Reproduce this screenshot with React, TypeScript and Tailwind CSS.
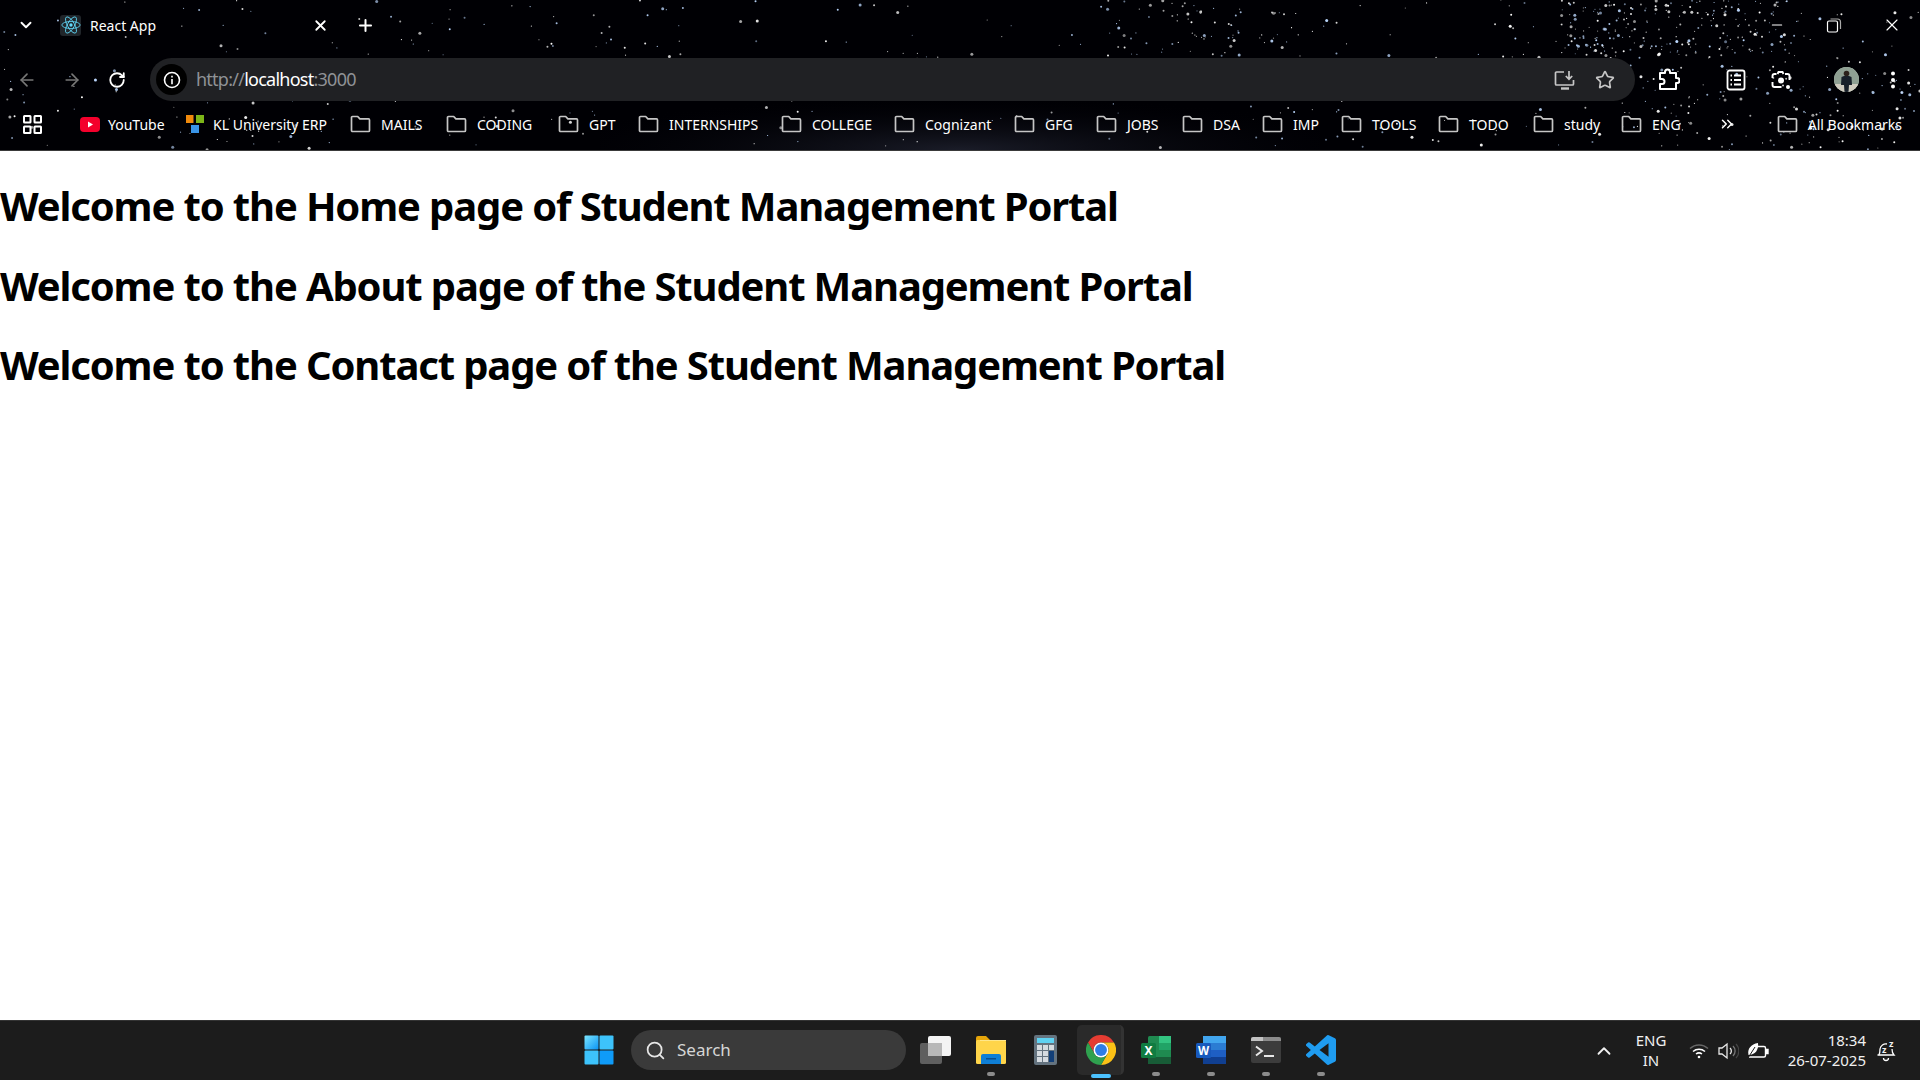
import React from "react";
import { ArrowLeft, ArrowRight, RotateCw, Star, ChevronDown, ChevronUp, ChevronsRight, X, Plus, Search, Minus } from "lucide-react";

function makeStars() {
  let seed = 12345;
  const rnd = () => {
    seed = (seed * 1664525 + 1013904223) % 4294967296;
    return seed / 4294967296;
  };
  const out: { x: number; y: number; r: number; o: number; c: string }[] = [];
  const add = (n: number, x0: number, x1: number, y0: number, y1: number) => {
    for (let i = 0; i < n; i++) {
      const big = rnd();
      out.push({
        x: x0 + rnd() * (x1 - x0),
        y: y0 + rnd() * (y1 - y0),
        r: big > 0.85 ? 1.5 : big > 0.5 ? 1 : 0.6,
        o: 0.5 + rnd() * 0.5,
        c: rnd() > 0.6 ? "#bcd8ff" : "#ffffff",
      });
    }
  };
  add(150, 0, 640, 0, 150);
  add(100, 640, 1280, 0, 150);
  add(70, 1100, 1300, 0, 56);
  add(190, 1280, 1920, 0, 150);
  add(210, 1560, 1800, 0, 56);
  add(120, 1620, 1920, 55, 150);
  return out;
}
const stars = makeStars();

const folders: [string, string][] = [
  ["MAILS", "w-[96px]"],
  ["CODING", "w-[112px]"],
  ["GPT", "w-[80px]"],
  ["INTERNSHIPS", "w-[143px]"],
  ["COLLEGE", "w-[113px]"],
  ["Cognizant", "w-[120px]"],
  ["GFG", "w-[82px]"],
  ["JOBS", "w-[86px]"],
  ["DSA", "w-[80px]"],
  ["IMP", "w-[79px]"],
  ["TOOLS", "w-[97px]"],
  ["TODO", "w-[95px]"],
  ["study", "w-[88px]"],
  ["ENG", "w-[76px]"],
];

function Folder() {
  return (
    <svg width="21" height="18" viewBox="0 0 21 18" fill="none" stroke="#c6c6c6" strokeWidth="1.7" strokeLinejoin="round" className="shrink-0">
      <path d="M1.5 2.5a1 1 0 0 1 1-1h5.2l2.2 2.4h8.6a1 1 0 0 1 1 1v10.600a1 1 0 0 1-1 1H2.500a1 1 0 0 1-1-1z" />
    </svg>
  );
}

function Bookmark({ label, className = "" }: { label: string; className?: string }) {
  return (
    <div className={"flex items-center gap-[10px] shrink-0 " + className}>
      <Folder />
      <span>{label}</span>
    </div>
  );
}

function ReactIcon() {
  return (
    <div className="w-[21px] h-[21px] rounded-[3px] bg-[#20252a] flex items-center justify-center">
      <svg width="20" height="20" viewBox="-12 -12 24 24" fill="none" stroke="#61dafb" strokeWidth="1">
        <ellipse rx="11" ry="4.200" />
        <ellipse rx="11" ry="4.200" transform="rotate(60)" />
        <ellipse rx="11" ry="4.200" transform="rotate(120)" />
        <circle r="2" fill="#61dafb" stroke="none" />
      </svg>
    </div>
  );
}

function Chrome({ size = 30 }: { size?: number }) {
  return (
    <svg width={size} height={size} viewBox="0 0 48 48">
      <path fill="#e53c32" d="M3.200 12A24 24 0 0 1 44.800 12L24 12A12 12 0 0 0 13.600 30Z" />
      <path fill="#fbc116" d="M44.800 12A24 24 0 0 1 24 48L34.400 30A12 12 0 0 0 24 12Z" />
      <path fill="#2fa14f" d="M24 48A24 24 0 0 1 3.200 12L13.600 30A12 12 0 0 0 34.400 30Z" />
      <circle cx="24" cy="24" r="12" fill="#fff" />
      <circle cx="24" cy="24" r="9.500" fill="#2f7de6" />
    </svg>
  );
}

function Dot({ on }: { on?: boolean }) {
  return on ? (
    <div className="absolute bottom-[3px] left-1/2 -translate-x-1/2 w-[20px] h-[4px] rounded-full bg-[#4cc2ff]" />
  ) : (
    <div className="absolute bottom-[5px] left-1/2 -translate-x-1/2 w-[8px] h-[4px] rounded-full bg-[#8c8c8c]" />
  );
}

function Cell({ children, dot, on }: { children: React.ReactNode; dot?: boolean; on?: boolean }) {
  return (
    <div className="relative w-[55px] h-[60px] flex items-center justify-center shrink-0">
      {on && <div className="absolute left-[4px] top-[4px] w-[47px] h-[50px] rounded-[5px] bg-[#2a2a2a] border-r-[3px] border-[#333333]" />}
      <div className="relative -mt-[1px]">{children}</div>
      {dot && <Dot on={on} />}
    </div>
  );
}

export default function App() {
  return (
    <div className="w-[1920px] h-[1080px] overflow-hidden flex flex-col bg-white font-['Noto_Sans',sans-serif]">
      <header className="relative h-[151px] shrink-0 bg-[#000004] border-b border-[#3a3a3a] text-white">
        <svg className="absolute inset-0" width="1920" height="150">
          <defs>
            <radialGradient id="neb" cx="50%" cy="100%" r="60%">
              <stop offset="0%" stopColor="#1a1c28" />
              <stop offset="100%" stopColor="#000004" stopOpacity="0" />
            </radialGradient>
          </defs>
          <rect x="600" y="60" width="720" height="90" fill="url(#neb)" />
          {stars.map((s, i) => (
            <circle key={i} cx={s.x} cy={s.y} r={s.r} fill={s.c} opacity={s.o} />
          ))}
        </svg>

        <div className="relative h-[50px] flex items-center">
          <ChevronDown size={18} strokeWidth={2.5} className="ml-[17px]" />
          <div className="ml-[25px]"><ReactIcon /></div>
          <span className="ml-[9px] text-[14px] w-[69px] whitespace-nowrap">React App</span>
          <X size={17} strokeWidth={2.5} className="ml-[153px]" />
          <Plus size={19} strokeWidth={2.5} className="ml-[27px]" />
          <div className="ml-auto flex items-center">
            <Minus size={16} strokeWidth={1.6} />
            <svg width="16" height="16" viewBox="0 0 16 16" fill="none" stroke="#fff" strokeWidth="1.200" className="ml-[41px]">
              <rect x="1.500" y="4" width="10" height="11" rx="1.500" />
              <path d="M4.500 2h7a3 3 0 0 1 3 3v7" stroke="#aaa" />
            </svg>
            <X size={20} strokeWidth={1.4} className="ml-[40px] mr-[18px]" />
          </div>
        </div>

        <div className="relative mt-[8px] h-[43px] flex items-center">
          <ArrowLeft size={20} strokeWidth={2} className="ml-[17px] text-[#777777]" />
          <ArrowRight size={20} strokeWidth={2} className="ml-[25px] text-[#777777]" />
          <RotateCw size={18} strokeWidth={2.4} className="ml-[26px]" />
          <div className="ml-[24px] w-[1485px] h-[43px] rounded-full bg-[#202124] flex items-center pl-[6px] pr-[20px]">
            <div className="w-[31px] h-[31px] rounded-full bg-black flex items-center justify-center">
              <svg width="18" height="18" viewBox="0 0 18 18" fill="none" stroke="#fff" strokeWidth="1.600">
                <circle cx="9" cy="9" r="7.500" />
                <path d="M9 8v5.200M9 4.800v1.600" />
              </svg>
            </div>
            <div className="ml-[9px] text-[18px] tracking-[-0.75px] text-[#8f9296]">
              http://<span className="text-white">localhost</span>:3000
            </div>
            <svg width="22" height="22" viewBox="0 0 22 22" fill="none" stroke="#c6c6c6" strokeWidth="1.700" className="ml-auto">
              <path d="M10 3H2.500a1 1 0 0 0-1 1v11a1 1 0 0 0 1 1h16a1 1 0 0 0 1-1v-4" />
              <path d="M7 19.500h8" strokeWidth="2.400" />
              <path d="M15 2v8M11.800 7l3.200 3.200L18.200 7" />
            </svg>
            <Star size={20} strokeWidth={2} className="ml-[19px] text-[#c6c6c6]" />
          </div>
          <svg width="24" height="24" viewBox="0 0 24 24" fill="none" stroke="#fff" strokeWidth="2" strokeLinejoin="round" className="ml-[21px]">
            <path d="M4 5h5V4a2.500 2.500 0 0 1 5 0v1h6v5h1a2.500 2.500 0 0 1 0 5h-1v6H4v-5h2a2.500 2.500 0 0 0 0-5H4z" />
          </svg>
          <svg width="20" height="22" viewBox="0 0 20 22" fill="none" stroke="#fff" strokeWidth="1.800" className="ml-[46px]">
            <rect x="1.500" y="1.500" width="17" height="19" rx="2" />
            <path d="M8 6.500h7M8 11h7M8 15.500h7M4.500 6.500h1.500M4.500 11h1.500M4.500 15.500h1.500" />
          </svg>
          <svg width="22" height="22" viewBox="0 0 22 22" fill="none" stroke="#fff" strokeWidth="1.900" className="ml-[24px]">
            <path d="M6.500 5H4.500a2 2 0 0 0-2 2v2M15 5h2.500a2 2 0 0 1 2 2v4M2.500 13v3a2 2 0 0 0 2 2h7" />
            <path d="M7.500 5l1-2h4l1 2" />
            <circle cx="11" cy="11.500" r="3" fill="#fff" stroke="none" />
            <circle cx="18" cy="18" r="2" fill="#fff" stroke="none" />
          </svg>
          <div className="ml-[42px] w-[25px] h-[25px] rounded-full bg-[#b9c4bb] overflow-hidden flex items-center justify-center shrink-0">
            <svg width="25" height="25" viewBox="0 0 25 25">
              <rect width="25" height="25" fill="#8fa093" />
              <rect y="17" width="25" height="8" fill="#cfcbbf" />
              <path d="M7.500 10q5-2.500 10 0l.5 8h-3l-.500 7h-4l-.500-7h-3z" fill="#18202a" />
              <circle cx="12.500" cy="6.500" r="2.800" fill="#2c211b" />
            </svg>
          </div>
          <svg width="6" height="18" viewBox="0 0 6 18" fill="#fff" className="ml-[31px]">
            <circle cx="3" cy="2.500" r="2" />
            <circle cx="3" cy="9" r="2" />
            <circle cx="3" cy="15.500" r="2" />
          </svg>
        </div>

        <div className="relative h-[48px] flex items-center text-[14px] text-white whitespace-nowrap -mt-[1px]">
          <svg width="19" height="19" viewBox="0 0 19 19" fill="none" stroke="#fff" strokeWidth="2" className="ml-[23px] shrink-0">
            <rect x="1" y="1" width="6.500" height="6.500" rx="0.500" />
            <rect x="11.500" y="1" width="6.500" height="6.500" rx="0.500" />
            <rect x="1" y="11.500" width="6.500" height="6.500" rx="0.500" />
            <rect x="11.500" y="11.500" width="6.500" height="6.500" rx="0.500" />
          </svg>
          <div className="ml-[38px] flex items-center">
            <div className="w-[106px] flex items-center gap-[8px]">
              <svg width="20" height="15" viewBox="0 0 20 15">
                <rect width="20" height="15" rx="4" fill="#f4002c" />
                <path d="M8 4.500l5 3-5 3z" fill="#fff" />
              </svg>
              <span>YouTube</span>
            </div>
            <div className="w-[164px] flex items-center gap-[9px]">
              <svg width="18" height="18" viewBox="0 0 18 18">
                <rect x="0" y="0" width="7.500" height="8" fill="#f08a0c" />
                <rect x="10" y="0" width="8" height="8" fill="#7cb518" />
                <rect x="5" y="10" width="8" height="8" fill="#3a94e6" />
              </svg>
              <span>KL University ERP</span>
            </div>
            {folders.map(([b, w]) => (
              <Bookmark key={b} label={b} className={w} />
            ))}
          </div>
          <ChevronsRight size={18} strokeWidth={2} className="ml-[21px]" />
          <div className="ml-auto mr-[18px]">
            <Bookmark label="All Bookmarks" />
          </div>
        </div>
      </header>

      <main className="flex-1 pt-[28px] text-black tracking-[-1.14px]">
        <h1 className="text-[40px] leading-[53px] font-bold mb-[26.5px]">Welcome to the Home page of Student Management Portal</h1>
        <h1 className="text-[40px] leading-[53px] font-bold mb-[26.5px]">Welcome to the About page of the Student Management Portal</h1>
        <h1 className="text-[40px] leading-[53px] font-bold">Welcome to the Contact page of the Student Management Portal</h1>
      </main>

      <footer className="h-[60px] shrink-0 bg-[#1c1c1c] border-t border-[#333333] flex items-center text-white">
        <svg width="30" height="30" viewBox="0 0 30 30" className="ml-[584px] -mt-[1px]">
          <defs>
            <linearGradient id="w" x1="0" y1="0" x2="1" y2="1">
              <stop offset="0%" stopColor="#7be6ff" />
              <stop offset="100%" stopColor="#0a94f5" />
            </linearGradient>
          </defs>
          <rect x="0.500" y="0.500" width="14" height="14" rx="1" fill="url(#w)" />
          <rect x="15.500" y="0.500" width="14" height="14" rx="1" fill="#3dc3fb" />
          <rect x="0.500" y="15.500" width="14" height="14" rx="1" fill="#3dc3fb" />
          <rect x="15.500" y="15.500" width="14" height="14" rx="1" fill="#0f9bf8" />
        </svg>
        <div className="ml-[17px] w-[275px] h-[40px] -mt-[1px] rounded-full bg-[#3a3a3a] flex items-center shrink-0">
          <Search size={21} strokeWidth={2} className="ml-[14px] text-[#e6e6e6]" />
          <span className="ml-[11px] text-[17px] text-[#d6d6d6]">Search</span>
        </div>
        <div className="ml-[2px] flex items-center">
          <Cell>
            <svg width="32" height="30" viewBox="0 0 32 30">
              <rect x="0" y="8" width="22" height="21" rx="2" fill="#5f5f5f" />
              <rect x="8" y="1" width="23" height="20" rx="2" fill="#f4f4f4" />
              <rect x="8" y="8" width="14" height="13" fill="#b8b8b8" />
            </svg>
          </Cell>
          <Cell dot>
            <svg width="31" height="30" viewBox="0 0 31 30">
              <path d="M1 3a2 2 0 0 1 2-2h8l4 4v4H1z" fill="#e5a50a" />
              <rect x="1" y="5" width="30" height="24" rx="1.500" fill="#ffd54a" />
              <rect x="5" y="5" width="26" height="1" fill="#ffe78a" />
              <path d="M6 21a2 2 0 0 1 2-2h16a2 2 0 0 1 2 2v8H6z" fill="#0f7fd6" />
              <rect x="11" y="23" width="10" height="1.500" fill="#0a4f8f" />
            </svg>
          </Cell>
          <Cell>
            <svg width="23" height="30" viewBox="0 0 23 30">
              <rect width="23" height="30" rx="2" fill="#64737f" />
              <rect x="3" y="3" width="17" height="5" fill="#5fd2f2" />
              <rect x="3" y="10" width="5" height="5" fill="#d5dbe0" />
              <rect x="9" y="10" width="5" height="5" fill="#d5dbe0" />
              <rect x="15" y="10" width="5" height="5" fill="#d5dbe0" />
              <rect x="3" y="16" width="5" height="5" fill="#d5dbe0" />
              <rect x="9" y="16" width="5" height="5" fill="#d5dbe0" />
              <rect x="3" y="22" width="5" height="5" fill="#d5dbe0" />
              <rect x="9" y="22" width="5" height="5" fill="#d5dbe0" />
              <rect x="15" y="16" width="5" height="11" fill="#123f78" />
            </svg>
          </Cell>
          <Cell dot on>
            <Chrome />
          </Cell>
          <Cell dot>
            <svg width="30" height="30" viewBox="0 0 30 30">
              <rect x="7" y="1" width="23" height="28" rx="1.500" fill="#1f8a50" />
              <rect x="18" y="1" width="12" height="7" fill="#33c481" />
              <rect x="18" y="8" width="12" height="7" fill="#21a366" />
              <rect x="7" y="22" width="23" height="7" fill="#185c37" />
              <rect x="0" y="8" width="15" height="15" rx="1.500" fill="#107c41" />
              <text x="7.500" y="20" textAnchor="middle" fontSize="12" fontWeight="700" fill="#fff" fontFamily="Noto Sans, sans-serif">X</text>
            </svg>
          </Cell>
          <Cell dot>
            <svg width="30" height="30" viewBox="0 0 30 30">
              <rect x="7" y="1" width="23" height="28" rx="1.500" fill="#1e5fc4" />
              <rect x="7" y="1" width="23" height="7" fill="#41a5ee" />
              <rect x="7" y="8" width="23" height="7" fill="#2b7cd3" />
              <rect x="7" y="22" width="23" height="7" fill="#103f91" />
              <rect x="0" y="8" width="15" height="15" rx="1.500" fill="#185abd" />
              <text x="7.500" y="20" textAnchor="middle" fontSize="11.500" fontWeight="700" fill="#fff" fontFamily="Noto Sans, sans-serif">W</text>
            </svg>
          </Cell>
          <Cell dot>
            <svg width="30" height="26" viewBox="0 0 30 26">
              <rect width="30" height="26" rx="2" fill="#3c3c3c" />
              <path d="M0 2a2 2 0 0 1 2-2h10v4H0z" fill="#c2c2c2" />
              <path d="M12 0h16a2 2 0 0 1 2 2v2H12z" fill="#8b8b8b" />
              <path d="M5 9.500l6 4.500-6 4.500" fill="none" stroke="#e8e8e8" strokeWidth="2" />
              <rect x="13" y="18" width="10" height="2" fill="#e8e8e8" />
            </svg>
          </Cell>
          <Cell dot>
            <svg width="30" height="30" viewBox="0 0 24 24">
              <path fill="#1f9cf0" d="M23.150 2.587L18.210.21a1.494 1.494 0 0 0-1.705.29l-9.460 8.630-4.120-3.128a.999.999 0 0 0-1.276.057L.327 7.261A1 1 0 0 0 .326 8.740L3.899 12 .326 15.260a1 1 0 0 0 .001 1.479L1.650 17.940a.999.999 0 0 0 1.276.057l4.120-3.128 9.460 8.630a1.492 1.492 0 0 0 1.704.290l4.942-2.377A1.500 1.500 0 0 0 24 20.060V3.939a1.500 1.500 0 0 0-.850-1.352zm-5.146 14.861L10.826 12l7.178-5.448v10.896z" />
            </svg>
          </Cell>
        </div>

        <div className="ml-auto flex items-center text-[15px] text-[#f0f0f0]">
          <ChevronUp size={22} strokeWidth={2} />
          <div className="ml-[16px] w-[40px] text-center leading-[20px] -mt-[2px]">
            <div>ENG</div>
            <div>IN</div>
          </div>
          <svg width="20" height="16" viewBox="0 0 20 16" fill="none" stroke="#fff" strokeWidth="1.500" className="ml-[18px]">
            <path d="M1 5.500a13 13 0 0 1 18 0" stroke="#666" />
            <path d="M4 8.500a9 9 0 0 1 12 0" />
            <path d="M7 11a5 5 0 0 1 6 0" />
            <circle cx="10" cy="14" r="1.300" fill="#fff" stroke="none" />
          </svg>
          <svg width="21" height="18" viewBox="0 0 21 18" fill="none" stroke="#e8e8e8" strokeWidth="1.300" className="ml-[9px]">
            <path d="M1 6h3l5-4v14l-5-4H1z" />
            <path d="M12 6a4 4 0 0 1 0 6" />
            <path d="M15 4a7 7 0 0 1 0 10" stroke="#777" />
            <path d="M18 2a10 10 0 0 1 0 14" stroke="#444" />
          </svg>
          <svg width="22" height="18" viewBox="0 0 22 18" fill="none" stroke="#fff" strokeWidth="1.400" className="ml-[8px]">
            <path d="M9 4.500h8a1.500 1.500 0 0 1 1.500 1.500v7.500a1.500 1.500 0 0 1-1.500 1.500H2" />
            <path d="M19 7.500h2v4h-2" fill="#fff" />
            <path d="M1.500 13C0 7 4 2 11 1c1 7-3 12-9.500 12z" fill="#fff" stroke="none" />
            <path d="M1 16 8 5" stroke="#1c1c1c" strokeWidth="1" />
          </svg>
          <div className="ml-[18px] w-[79px] text-right leading-[20px] whitespace-nowrap -mt-[2px]">
            <div>18:34</div>
            <div>26-07-2025</div>
          </div>
          <div className="relative ml-[10px] mr-[24px] w-[20px] h-[22px]">
            <svg width="20" height="22" viewBox="0 0 20 22" fill="none" stroke="#fff" strokeWidth="1.300">
              <path d="M3 15c1-2 1-4 1-6a6 6 0 0 1 7-5" />
              <path d="M16 9c0 2 0 4 2 6H1.500" />
              <path d="M7.500 18a2.500 2.500 0 0 0 5 0" />
            </svg>
            <span className="absolute left-[6px] top-[5px] text-[9px] font-bold leading-none">z</span>
            <span className="absolute left-[13px] top-[-1px] text-[9px] font-bold leading-none">z</span>
          </div>
        </div>
      </footer>
    </div>
  );
}
